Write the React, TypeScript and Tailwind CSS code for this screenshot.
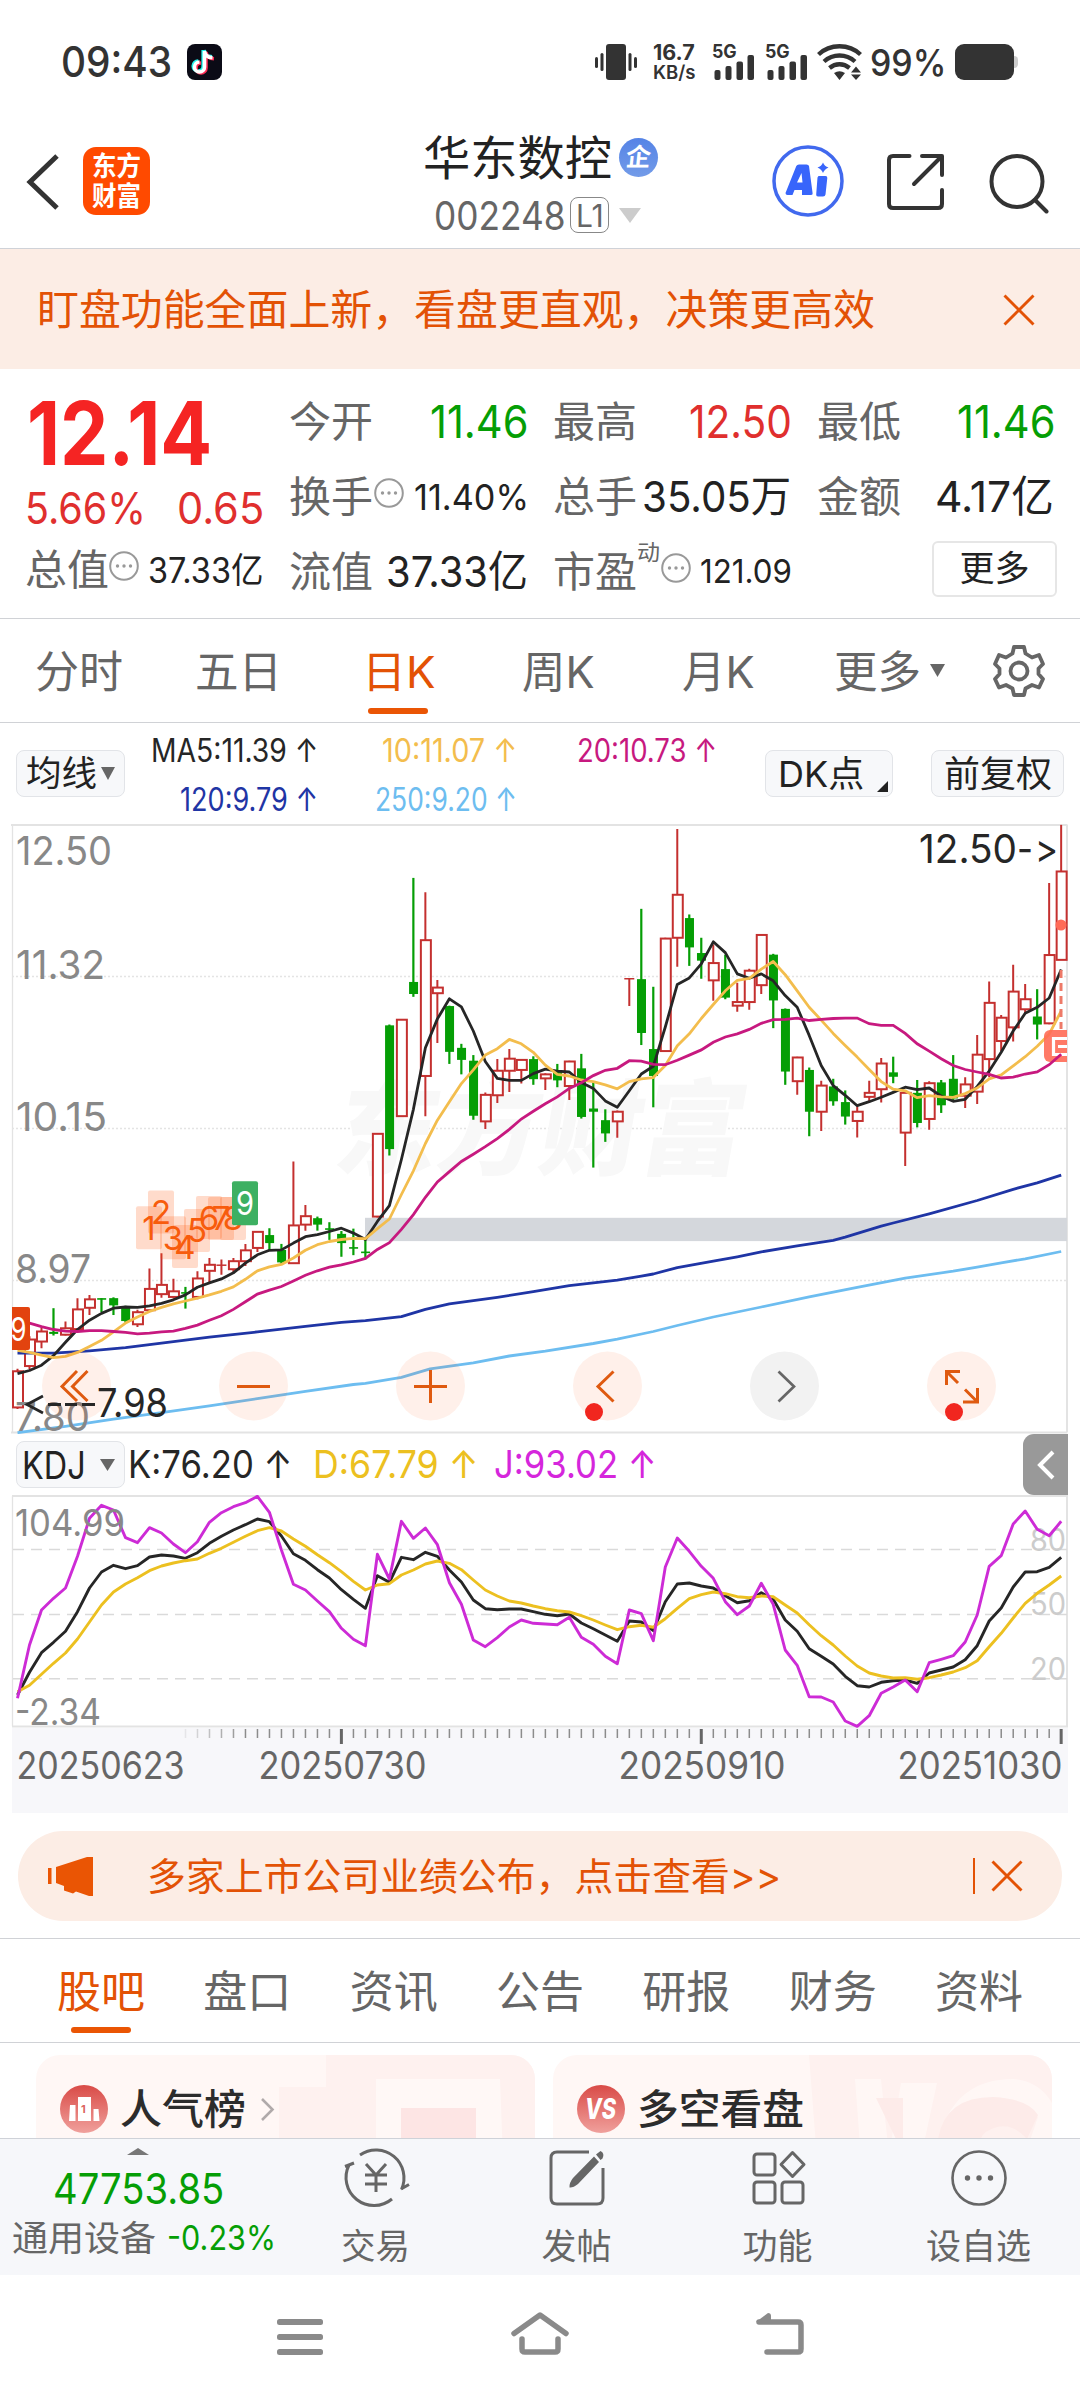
import React, { useLayoutEffect, useRef, useState } from 'react';

/* Single line of text squeezed or stretched to the width of its box. */
function Fit({ className = '', children }: { className?: string; children: React.ReactNode }) {
  const box = useRef<HTMLDivElement>(null);
  const inner = useRef<HTMLSpanElement>(null);
  const [k, setK] = useState(1);
  useLayoutEffect(() => {
    if (box.current && inner.current && inner.current.offsetWidth > 0) {
      setK(box.current.clientWidth / inner.current.offsetWidth);
    }
  }, []);
  return (
    <div ref={box} className={'flex shrink-0 items-center leading-none ' + className}>
      <span ref={inner} className="shrink-0 origin-left whitespace-nowrap" style={{ transform: `scaleX(${k})` }}>
        {children}
      </span>
    </div>
  );
}

/* ---------- chart data ---------- */

// [kind, high, bodyTop, bodyBottom, low]; r = hollow rise, g = filled fall
type Candle = ['r' | 'g', number, number, number, number];
const candles: Candle[] = [
  ['r', 1391, 1397, 1487, 1491], ['r', 1310, 1318, 1384, 1392], ['r', 1288, 1298, 1323, 1340], ['g', 1240, 1299, 1304, 1308],
  ['r', 1273, 1290, 1306, 1308], ['r', 1215, 1243, 1292, 1296], ['r', 1207, 1218, 1239, 1257], ['g', 1215, 1215, 1219, 1250],
  ['g', 1213, 1215, 1233, 1257], ['g', 1234, 1238, 1272, 1276], ['r', 1244, 1250, 1280, 1287], ['r', 1141, 1192, 1245, 1248],
  ['r', 1103, 1182, 1205, 1214], ['r', 1167, 1198, 1212, 1216], ['g', 1187, 1200, 1204, 1241], ['r', 1148, 1166, 1212, 1218],
  ['r', 1115, 1132, 1147, 1175], ['r', 1119, 1133, 1134, 1157], ['r', 1115, 1123, 1143, 1152], ['r', 1080, 1096, 1123, 1135],
  ['r', 1048, 1050, 1090, 1100], ['g', 1041, 1058, 1078, 1095], ['g', 1080, 1095, 1126, 1130], ['r', 875, 1034, 1128, 1130],
  ['r', 983, 1011, 1032, 1047], ['g', 1012, 1016, 1032, 1047], ['g', 1026, 1041, 1045, 1070], ['g', 1048, 1055, 1078, 1112],
  ['g', 1042, 1088, 1092, 1108], ['g', 1070, 1099, 1103, 1118], ['r', 804, 806, 1012, 1014], ['g', 534, 536, 844, 860],
  ['r', 521, 522, 762, 764], ['g', 169, 428, 458, 465], ['r', 205, 324, 662, 762], ['r', 423, 442, 456, 580],
  ['g', 487, 488, 602, 632], ['g', 582, 592, 622, 658], ['g', 610, 624, 761, 771], ['r', 703, 709, 775, 794],
  ['r', 620, 649, 710, 729], ['r', 595, 619, 649, 702], ['r', 620, 622, 647, 681], ['g', 613, 620, 670, 684],
  ['r', 655, 658, 668, 697], ['g', 632, 648, 673, 690], ['r', 624, 626, 687, 722], ['g', 607, 643, 764, 768],
  ['g', 678, 743, 751, 890], ['g', 745, 772, 805, 826], ['r', 748, 751, 775, 816], ['r', 419, 420, 420, 488],
  ['g', 246, 421, 555, 585], ['g', 440, 595, 662, 740], ['r', 318, 320, 600, 602], ['r', 47, 211, 318, 390],
  ['g', 260, 269, 342, 388], ['g', 318, 356, 375, 420], ['r', 335, 381, 424, 475], ['g', 360, 396, 467, 471],
  ['r', 430, 478, 487, 502], ['r', 395, 400, 478, 497], ['r', 310, 311, 436, 458], ['g', 358, 360, 474, 543],
  ['g', 494, 495, 651, 684], ['r', 614, 616, 675, 709], ['g', 641, 647, 751, 812], ['r', 674, 686, 751, 799],
  ['g', 669, 688, 725, 736], ['g', 698, 727, 763, 783], ['r', 738, 751, 774, 815], ['r', 674, 704, 714, 724],
  ['r', 617, 631, 695, 728], ['g', 614, 653, 664, 680], ['r', 700, 704, 803, 886], ['g', 672, 704, 779, 790],
  ['r', 675, 680, 769, 796], ['g', 672, 678, 735, 754], ['g', 610, 669, 718, 723], ['r', 665, 683, 711, 742],
  ['r', 560, 609, 701, 732], ['r', 427, 480, 620, 665], ['r', 510, 517, 575, 600], ['r', 385, 452, 541, 576],
  ['r', 433, 471, 496, 505], ['g', 446, 514, 534, 571], ['r', 182, 361, 531, 533], ['r', 37, 153, 373, 373],
];
const ma5 = [1403, 1395, 1382, 1358, 1325, 1293, 1270, 1253, 1240, 1237, 1238, 1234, 1228, 1219, 1207, 1188, 1177, 1167, 1152, 1128, 1107, 1096, 1095, 1078, 1062, 1057, 1049, 1041, 1053, 1069, 1024, 985, 870, 745, 592, 520, 470, 490, 550, 626, 668, 673, 673, 656, 645, 650, 652, 678, 693, 724, 740, 699, 657, 638, 540, 434, 418, 383, 328, 355, 408, 419, 408, 425, 462, 491, 561, 636, 686, 710, 736, 726, 715, 703, 690, 696, 692, 712, 725, 720, 688, 650, 603, 550, 506, 491, 468, 397];
const ma10 = [1345, 1350, 1357, 1363, 1360, 1350, 1335, 1320, 1299, 1277, 1262, 1248, 1238, 1229, 1222, 1215, 1207, 1198, 1187, 1168, 1147, 1137, 1131, 1115, 1096, 1082, 1074, 1069, 1066, 1067, 1042, 1018, 957, 898, 830, 772, 726, 681, 647, 610, 594, 571, 582, 603, 635, 658, 662, 672, 676, 684, 694, 676, 669, 666, 636, 587, 557, 519, 484, 450, 424, 419, 396, 377, 410, 450, 491, 523, 556, 586, 615, 646, 676, 695, 699, 716, 711, 714, 715, 706, 692, 669, 659, 637, 614, 588, 558, 500];
const ma20 = [1270, 1277, 1286, 1293, 1297, 1298, 1296, 1296, 1298, 1300, 1304, 1302, 1299, 1297, 1290, 1282, 1270, 1259, 1243, 1224, 1205, 1195, 1186, 1172, 1158, 1147, 1138, 1132, 1125, 1116, 1094, 1077, 1044, 1007, 964, 926, 900, 875, 857, 838, 818, 795, 769, 750, 731, 714, 693, 679, 661, 648, 643, 624, 625, 633, 634, 623, 610, 597, 578, 565, 557, 546, 531, 522, 521, 518, 524, 521, 519, 518, 518, 532, 536, 536, 556, 582, 600, 619, 636, 646, 652, 658, 667, 665, 657, 652, 634, 608];
const ma120: [number, number][] = [[0, 1352], [3, 1352], [6, 1346], [9, 1338], [12, 1327], [16, 1312], [20, 1299], [24, 1285], [27, 1275], [29, 1271], [32, 1261], [34, 1243], [36, 1229], [40, 1213], [43, 1199], [46, 1184], [48, 1177], [50, 1170], [52, 1160], [53, 1155], [55, 1139], [58, 1123], [60, 1112], [62, 1100], [65, 1085], [68, 1071], [69, 1063], [72, 1036], [73, 1028], [76, 1005], [80, 972], [83, 944], [85, 928], [87, 909]];
const ma250: [number, number][] = [[0, 1550], [4, 1534], [8, 1516], [12, 1500], [16, 1483], [20, 1465], [24, 1447], [28, 1430], [29, 1427], [32, 1412], [34.4, 1391], [38, 1376], [41, 1359], [44, 1347], [48, 1328], [50, 1317], [53, 1298], [55, 1283], [58, 1262], [62, 1237], [66, 1212], [70, 1188], [74, 1165], [78, 1148], [80, 1138], [82, 1127], [84, 1117], [87, 1099]];
const kLine = [795, 727, 668, 637, 604, 545, 474, 426, 406, 416, 407, 381, 375, 378, 385, 368, 340, 319, 300, 284, 267, 275, 318, 371, 391, 419, 444, 479, 508, 535, 437, 457, 382, 389, 367, 379, 420, 456, 510, 536, 539, 537, 537, 545, 553, 557, 552, 579, 596, 615, 634, 573, 576, 602, 515, 462, 459, 468, 474, 497, 518, 512, 488, 508, 570, 604, 656, 679, 702, 739, 767, 771, 757, 752, 750, 760, 729, 720, 711, 689, 647, 573, 534, 471, 426, 425, 412, 382];
const dLine = [785, 766, 733, 700, 669, 627, 576, 525, 486, 462, 443, 422, 408, 399, 392, 387, 370, 355, 337, 319, 302, 293, 303, 327, 349, 374, 398, 425, 454, 480, 465, 461, 435, 420, 402, 393, 400, 419, 450, 480, 498, 513, 519, 528, 536, 542, 546, 557, 570, 585, 599, 590, 586, 592, 566, 535, 506, 494, 486, 491, 500, 503, 498, 500, 525, 549, 584, 617, 645, 678, 708, 729, 738, 744, 743, 748, 743, 735, 726, 713, 692, 650, 610, 564, 520, 490, 465, 438];
const jLine = [805, 645, 540, 505, 474, 379, 265, 226, 240, 323, 338, 293, 309, 342, 368, 335, 277, 248, 230, 218, 199, 247, 360, 463, 480, 513, 545, 595, 628, 647, 373, 447, 274, 325, 294, 344, 458, 523, 630, 650, 623, 591, 570, 580, 582, 584, 562, 622, 643, 679, 701, 540, 551, 632, 411, 324, 364, 409, 445, 515, 554, 528, 460, 523, 660, 706, 800, 801, 816, 873, 889, 857, 790, 771, 750, 785, 698, 688, 677, 636, 555, 409, 377, 282, 243, 298, 317, 274];

const X = (i: number) => 17.5 + i * 11.996;
const Y = (v: number) => v / 2.489 - 13;
const KY = (v: number) => v / 3 - 65;
const line = (d: number[], f: (v: number) => number) => d.map((v, i) => `${X(i).toFixed(1)},${f(v).toFixed(1)}`).join(' ');
const sparse = (d: [number, number][]) => d.map(([i, v]) => `${X(i).toFixed(1)},${Y(v).toFixed(1)}`).join(' ');

const marks: [string, number, number][] = [
  ['1', 136, 986], ['2', 148, 947], ['3', 160, 1011], ['4', 172, 1033], ['5', 184, 993], ['6', 196, 961], ['7', 208, 963], ['8', 220, 963],
];

function PriceChart() {
  return (
    <svg className="block shrink-0" width="1080" height="611" viewBox="0 0 1080 611" fontFamily="Inter, sans-serif">
      <g stroke="#e3e3e3" fill="none">
        <path d="M11 2H1067.500" strokeWidth="2" />
        <path d="M11 609.500H1067.500" strokeWidth="2" />
        <path d="M12.500 2V609" strokeWidth="1.300" />
        <path d="M1067 2V609" strokeWidth="2" />
        <path d="M12 153.500H1067M12 305.500H1067M12 457.500H1067" strokeWidth="1.500" strokeDasharray="2 2" stroke="#e4e4e4" />
      </g>
      <text x="334" y="344" fontSize="104" fontWeight="900" fontFamily="'Noto Sans CJK SC', sans-serif" fill="#f8f8f8" textLength="408" lengthAdjust="spacingAndGlyphs" transform="translate(58 0) skewX(-10)">东方财富</text>
      <rect x="365" y="394.800" width="702" height="23.300" fill="#d4d7dc" />
      {candles.map(([c, h, t, b, l], i) => {
        const x = X(i);
        if (c === 'g')
          return (
            <g key={i} fill="#059e05">
              <rect x={x - 1.100} y={Y(h)} width="2.200" height={Y(l) - Y(h)} />
              <rect x={x - 4.300} y={Y(t)} width="9" height={Math.max(Y(b) - Y(t), 1.500)} />
            </g>
          );
        return (
          <g key={i} fill="none" stroke="#c4302f" strokeWidth="2">
            <path d={`M${x} ${Y(h)}V${Y(t)}M${x} ${Y(b)}V${Y(l)}`} />
            {b - t < 3 ? <path d={`M${x - 5} ${Y(t)}h10`} strokeWidth="1.500" /> : <rect x={x - 4.500} y={Y(t)} width="10" height={Y(b) - Y(t)} fill="#fff" />}
          </g>
        );
      })}
      <circle cx="1061" cy="102" r="5.500" fill="#ff6b57" />
      <g fill="none" strokeWidth="2.800" strokeLinejoin="round">
        <polyline points={sparse(ma250)} stroke="#6dbdf0" />
        <polyline points={sparse(ma120)} stroke="#1f35a5" />
        <polyline points={line(ma5, Y)} stroke="#262626" />
        <polyline points={line(ma10, Y)} stroke="#f3bd4d" />
      </g>
      <path d="M1061 147V206" stroke="#ee7a68" strokeWidth="3" strokeDasharray="8 5" />
      <path d="M1067 207H1050a6 6 0 0 0-6 6V233a6 6 0 0 0 6 6H1067Z" fill="#ff6b57" fillOpacity=".9" />
      <path d="M1067 215.500H1053.500V231.500H1067M1058 223.500H1067" stroke="#fff" strokeWidth="3.200" fill="none" />
      <polyline points={line(ma20, Y)} fill="none" stroke="#c7197f" strokeWidth="2.800" />
      {marks.map(([n, x, y]) => (
        <g key={n}>
          <rect x={x} y={Y(y)} width="26" height="43" rx="2" fill="#ff5a14" fillOpacity=".22" />
          <text x={x + 13} y={Y(y) + 33.500} fontSize="33" fill="#f75c0c" textAnchor="middle">{n}</text>
        </g>
      ))}
      <rect x="232" y={Y(924)} width="26" height="44" rx="2" fill="#3db062" />
      <text x="245" y={Y(924) + 34} fontSize="33" fill="#fff" textAnchor="middle" textLength="18" lengthAdjust="spacingAndGlyphs">9</text>
      <path d="M12 484H28a2 2 0 0 1 2 2V525a2 2 0 0 1-2 2H12Z" fill="#e2430f" />
      <text x="10.500" y="518" fontSize="33" fill="#fff" textLength="16" lengthAdjust="spacingAndGlyphs">9</text>
      <g fill="#888" fontSize="39.500">
        <text x="16" y="41.500" textLength="96" lengthAdjust="spacingAndGlyphs">12.50</text>
        <text x="16" y="155.500" textLength="89" lengthAdjust="spacingAndGlyphs">11.32</text>
        <text x="16" y="307.500" textLength="91" lengthAdjust="spacingAndGlyphs">10.15</text>
        <text x="15" y="459.500" textLength="76" lengthAdjust="spacingAndGlyphs">8.97</text>
        <text x="15" y="608" textLength="75" lengthAdjust="spacingAndGlyphs">7.80</text>
      </g>
      <g fill="#ff5a14" fillOpacity=".09">
        <circle cx="76.500" cy="563" r="34.500" />
        <circle cx="253.500" cy="563" r="34.500" />
        <circle cx="430.500" cy="563" r="34.500" />
        <circle cx="607.500" cy="563" r="34.500" />
        <circle cx="961.500" cy="563" r="34.500" />
      </g>
      <circle cx="784.500" cy="563" r="34.500" fill="#f2f2f2" />
      <g fill="none" stroke="#df5a10" strokeWidth="3">
        <path d="M77 548L62 563.500L77 578M87.500 548L72.500 563.500L87.500 578" />
        <path d="M237 563.500H270M414 563.500H447M430.500 547V580" />
        <path d="M613.500 548.500L598 563.500L613.500 578.500" />
        <path d="M946.500 562V548.500H960M947 549L958 560M977.500 565V579H963M977 578.500L965 566.500" />
      </g>
      <path d="M778.500 548.500L794 563.500L778.500 578.500" fill="none" stroke="#666" strokeWidth="2.700" />
      <circle cx="594" cy="589" r="9" fill="#f1261f" />
      <circle cx="954" cy="589" r="9" fill="#f1261f" />
      <g fill="#262626">
        <text x="919" y="39.500" fontSize="40" textLength="98" lengthAdjust="spacingAndGlyphs">12.50</text>
        <text x="1017" y="39.500" fontSize="40" textLength="16" lengthAdjust="spacingAndGlyphs">-</text>
        <text x="1035" y="39.500" fontSize="40" textLength="23" lengthAdjust="spacingAndGlyphs">&gt;</text>
        <text x="97" y="594" fontSize="40" textLength="71" lengthAdjust="spacingAndGlyphs">7.98</text>
        <path d="M43 573L27 581.500L43 590M48 581.500H61M65 581.500H77M82 581.500H95" fill="none" stroke="#262626" strokeWidth="2.800" />
      </g>
    </svg>
  );
}

function KdjChart() {
  return (
    <svg className="block shrink-0" width="1080" height="318" viewBox="0 0 1080 318" fontFamily="Inter, sans-serif">
      <rect x="12" y="233" width="1056" height="85" fill="#f7f7fa" />
      <g stroke="#e3e3e3" strokeWidth="2" fill="none">
        <path d="M12 1H1067V231.500H12" />
        <path d="M12.500 1V231" strokeWidth="1.300" />
        <path d="M13 54.500H1067M13 119.500H1067M13 183.800H1067" strokeWidth="1.500" stroke="#dadada" strokeDasharray="11 7" />
      </g>
      <g fill="#ccc" fontSize="30.500">
        <text x="1030" y="56" textLength="36" lengthAdjust="spacingAndGlyphs">80</text>
        <text x="1030" y="120" textLength="36" lengthAdjust="spacingAndGlyphs">50</text>
        <text x="1030" y="185" textLength="36" lengthAdjust="spacingAndGlyphs">20</text>
      </g>
      <g fill="none" strokeWidth="2.900" strokeLinejoin="round">
        <polyline points={line(kLine, KY)} stroke="#262626" />
        <polyline points={line(dLine, KY)} stroke="#ecc020" />
        <polyline points={line(jLine, KY)} stroke="#cd2bd6" />
      </g>
      <g fill="#888" fontSize="37">
        <text x="15" y="41" textLength="110" lengthAdjust="spacingAndGlyphs">104.99</text>
        <text x="15" y="230" textLength="86" lengthAdjust="spacingAndGlyphs">-2.34</text>
      </g>
      {candles.map((_, i) => {
        if (i < 14) return null;
        const major = i === 27 || i === 57 || i === 87;
        return (
          <rect key={i} x={X(i) - (major ? 1.500 : 0.700)} y="234" width={major ? 3 : 1.500} height={major ? 15 : 9} fill={major ? '#666' : '#8c8c8c'} opacity={i < 19 ? (i - 13) / 6 : 1} />
        );
      })}
      <g fill="#666" fontSize="38">
        <text x="16.500" y="283.500" textLength="168" lengthAdjust="spacingAndGlyphs">20250623</text>
        <text x="258.500" y="283.500" textLength="168" lengthAdjust="spacingAndGlyphs">20250730</text>
        <text x="618.500" y="283.500" textLength="167" lengthAdjust="spacingAndGlyphs">20250910</text>
        <text x="897.500" y="283.500" textLength="165" lengthAdjust="spacingAndGlyphs">20251030</text>
      </g>
    </svg>
  );
}

/* ---------- small pieces ---------- */

function Dots() {
  return (
    <svg width="30" height="30" viewBox="0 0 30 30" className="shrink-0">
      <circle cx="15" cy="15" r="13.800" fill="none" stroke="#999" strokeWidth="2" />
      <g fill="#999"><circle cx="8.500" cy="15" r="1.700" /><circle cx="15" cy="15" r="1.700" /><circle cx="21.500" cy="15" r="1.700" /></g>
    </svg>
  );
}

function Close({ className = '' }: { className?: string }) {
  return (
    <svg width="34" height="34" viewBox="0 0 34 34" className={'shrink-0 ' + className}>
      <path d="M2.500 2.500L31.500 31.500M31.500 2.500L2.500 31.500" stroke="#e35205" strokeWidth="2.900" />
    </svg>
  );
}

function Down({ className = '' }: { className?: string }) {
  return (
    <svg viewBox="0 0 10 8" preserveAspectRatio="none" className={'shrink-0 ' + className}>
      <path d="M0 0H10L5 8Z" fill="currentColor" />
    </svg>
  );
}

function Signal() {
  return (
    <div className="relative h-9 w-[42px]">
      <Fit className="absolute left-0 top-0 h-[14px] w-[25px] text-[18.500px] font-bold">5G</Fit>
      <svg className="absolute left-0 top-0" width="43" height="36" viewBox="0 0 43 36" fill="#333">
        <rect x="2.500" y="26" width="6" height="10" rx="2" />
        <rect x="13.500" y="22" width="6" height="14" rx="2" />
        <rect x="24.500" y="17.500" width="6.500" height="18.500" rx="2" />
        <rect x="35.500" y="11" width="6.500" height="25" rx="2" />
      </svg>
    </div>
  );
}

function StatusBar() {
  return (
    <div className="flex h-[124px] items-start pl-[61px] pt-11 text-[#333]">
      <div className="flex h-9 items-center">
        <Fit className="w-[111px] text-[42px] font-medium">09:43</Fit>
        <svg className="ml-[15px]" width="35" height="36" viewBox="0 0 35 36">
          <rect width="35" height="36" rx="8" fill="#0b0b16" />
          <g fill="none" strokeWidth="3.600">
            <path d="M17.500 7V23a5 5 0 1 1-5-5" stroke="#25f4ee" transform="translate(-1.300 -1)" />
            <path d="M17.500 7c.5 4 3.500 6.500 8 6.800" stroke="#25f4ee" transform="translate(-.5 -1)" />
            <path d="M17.500 7V23a5 5 0 1 1-5-5M17.500 7c.5 4 3.500 6.500 8 6.800" stroke="#fe2c55" transform="translate(1.500 1)" />
            <path d="M17.500 7V23a5 5 0 1 1-5-5M17.500 7c.5 4 3.500 6.500 8 6.800" stroke="#fff" />
          </g>
        </svg>
      </div>
      <svg className="ml-[373px]" width="42" height="36" viewBox="0 0 42 36" fill="#333">
        <rect x="11" width="20" height="36" rx="3" />
        <rect x="0" y="13" width="3" height="11" rx="1.500" /><rect x="5.500" y="9" width="3" height="18" rx="1.500" />
        <rect x="39" y="13" width="3" height="11" rx="1.500" /><rect x="33.500" y="9" width="3" height="18" rx="1.500" />
      </svg>
      <div className="ml-4 flex h-9 flex-col justify-between">
        <Fit className="h-4 w-[42px] text-[21px] font-bold">16.7</Fit>
        <Fit className="h-4 w-[43px] text-[19px] font-semibold">KB/s</Fit>
      </div>
      <div className="ml-4"><Signal /></div>
      <div className="ml-[11px]"><Signal /></div>
      <svg className="ml-[10px]" width="46" height="36" viewBox="0 0 46 36" fill="none" stroke="#333" strokeWidth="4.300">
        <path d="M1.500 10.500C13-.5 32-.5 43.500 10.500M7 17.500c9-8 22-8 31 0M12.500 24c6-5 14-5 20 0" />
        <path d="M17 29q5.500-3.500 11 0L22.500 36ZM34 28.500h10L39 22.500ZM34 30.500h10L39 36Z" fill="#333" stroke="none" />
      </svg>
      <Fit className="ml-[7px] h-9 w-[76px] text-[37px] font-medium">99%</Fit>
      <div className="ml-[9px] h-9 w-[59px] rounded-[9px] bg-[#333]" />
      <div className="mt-3 h-3 w-[4px] rounded-r bg-[#ccc]" />
    </div>
  );
}

function Header() {
  return (
    <div className="flex h-[125px] border-b border-[#cfd2d8]">
      <svg className="ml-[26px] mt-[30px]" width="34" height="56" viewBox="0 0 34 56" fill="none" stroke="#333" strokeWidth="5">
        <path d="M31 2L4 28L31 54" />
      </svg>
      <div className="ml-[23px] mt-[23px] flex h-[68px] w-[67px] flex-col items-center justify-center gap-[3px] rounded-[13px] bg-[#ff4a00] text-white">
        <Fit className="h-[27px] w-[49px] text-[27px] font-bold">东方</Fit>
        <Fit className="h-[27px] w-[49px] text-[27px] font-bold">财富</Fit>
      </div>
      <div className="ml-[273px] w-[240px]">
        <div className="mt-[9px] flex h-[49px] items-center">
          <Fit className="w-[189px] text-[47px] text-[#222]">华东数控</Fit>
          <div className="ml-[7px] flex size-[39px] items-center justify-center rounded-full bg-gradient-to-b from-[#5583e6] to-[#739be8] text-[25px] font-bold leading-none text-white">
            <span className="-skew-x-6">企</span>
          </div>
        </div>
        <div className="mt-[15px] flex h-9 items-center">
          <Fit className="ml-[11px] w-[132px] text-[39px] text-[#666]">002248</Fit>
          <div className="ml-[4px] flex h-9 w-[39px] items-center justify-center rounded-lg border border-[#888] text-[#666]">
            <Fit className="w-[28px] text-[31px]">L1</Fit>
          </div>
          <Down className="ml-[10px] h-[15px] w-[22px] text-[#ccc]" />
        </div>
      </div>
      <svg className="ml-[109px] mt-[21px]" width="72" height="72" viewBox="0 0 72 72">
        <circle cx="36" cy="36" r="34" fill="none" stroke="#4169ee" strokeWidth="3.500" />
        <g fill="#3865fb">
          <path fillRule="evenodd" d="M13.500 48Q13.500 50 15.500 50H20.500L22.500 45H30V50H39Q41 50 40.500 47.500L37 21Q36.500 19.500 34.500 19.500H27Q25 19.500 24.300 21ZM25 37.500L29.500 28L30.500 37.500Z" />
          <path d="M46.500 31H53.500Q55.500 31 55.300 33L53.500 49.500Q53.200 51.500 51 51.500H46Q44 51.500 44.200 49.500L45.500 32.500ZM51 17.500Q52.500 21.500 56.500 22.500Q52.500 24 51 28Q49.500 24 45.500 22.500Q49.500 21.500 51 17.500Z" />
        </g>
      </svg>
      <svg className="ml-[41px] mt-[28px]" width="60" height="60" viewBox="0 0 60 60" fill="none" stroke="#333" strokeWidth="4" strokeLinecap="round" strokeLinejoin="round">
        <path d="M24.500 4H8Q4 4 4 8V52Q4 56 8 56H53Q57 56 57 52V38M37 4H57V23M56 5L29 32" />
      </svg>
      <svg className="ml-[42px] mt-[28px]" width="62" height="62" viewBox="0 0 62 62" fill="none" stroke="#333" strokeWidth="4" strokeLinecap="round">
        <circle cx="30" cy="29.500" r="25.500" /><path d="M48 48L59.500 59.500" />
      </svg>
    </div>
  );
}

function Quote() {
  return (
    <div className="flex h-[250px] border-b border-[#d0d2d6] text-[42px] text-[#666]">
      <div className="w-[289px] shrink-0">
        <Fit className="ml-[27px] mt-[30px] h-[68px] w-[185px] text-[88px] font-bold text-[#f52423]">12.14</Fit>
        <div className="mt-[24px] flex h-[34px] items-center text-[44px] text-[#e02f2e]">
          <Fit className="ml-[25px] w-[121px]">5.66%</Fit>
          <Fit className="ml-[31px] w-[87px]">0.65</Fit>
        </div>
        <div className="mt-[22px] flex h-[46px] items-center">
          <Fit className="ml-[25px] w-[84px]">总值</Fit>
          <div className="mb-2"><Dots /></div>
          <Fit className="ml-[9px] w-[115px] text-[35px] text-[#222]">37.33亿</Fit>
        </div>
      </div>
      <div className="mt-[15px] w-[263px] shrink-0">
        <div className="flex h-[75px] items-center">
          <Fit className="w-[84px]">今开</Fit>
          <Fit className="ml-[57px] w-[99px] text-[45px] text-[#059e05]">11.46</Fit>
        </div>
        <div className="flex h-[75px] items-center">
          <Fit className="w-[84px]">换手</Fit>
          <div className="mb-2 ml-px"><Dots /></div>
          <Fit className="ml-[10px] w-[115px] text-[36px] text-[#222]">11.40%</Fit>
        </div>
        <div className="flex h-[75px] items-center">
          <Fit className="w-[84px]">流值</Fit>
          <Fit className="ml-[13px] w-[142px] text-[43px] text-[#222]">37.33亿</Fit>
        </div>
      </div>
      <div className="mt-[15px] w-[263px] shrink-0">
        <div className="flex h-[75px] items-center">
          <Fit className="ml-px w-[84px]">最高</Fit>
          <Fit className="ml-[52px] w-[103px] text-[45px] text-[#e02f2e]">12.50</Fit>
        </div>
        <div className="flex h-[75px] items-center">
          <Fit className="ml-px w-[84px]">总手</Fit>
          <Fit className="ml-[5px] w-[149px] text-[43px] text-[#222]">35.05万</Fit>
        </div>
        <div className="flex h-[75px] items-center">
          <Fit className="ml-px w-[84px]">市盈</Fit>
          <Fit className="mb-[39px] w-[23px] text-[22px]">动</Fit>
          <div className="mb-2 ml-px"><Dots /></div>
          <Fit className="ml-[9px] w-[92px] text-[33px] text-[#222]">121.09</Fit>
        </div>
      </div>
      <div className="mt-[15px] w-[265px] shrink-0">
        <div className="flex h-[75px] items-center">
          <Fit className="ml-[2px] w-[84px]">最低</Fit>
          <Fit className="ml-[56px] w-[99px] text-[45px] text-[#059e05]">11.46</Fit>
        </div>
        <div className="flex h-[75px] items-center">
          <Fit className="ml-[2px] w-[84px]">金额</Fit>
          <Fit className="ml-[34px] w-[119px] text-[43px] text-[#222]">4.17亿</Fit>
        </div>
        <div className="flex h-[69px] items-center">
          <div className="ml-[117px] flex h-[56px] w-[125px] items-center justify-center rounded-md border-2 border-[#e6e6e6] text-[#222]">
            <Fit className="w-[70px] text-[35px]">更多</Fit>
          </div>
        </div>
      </div>
    </div>
  );
}

function PeriodTabs() {
  return (
    <div className="flex h-[104px] items-center border-b border-[#d0d2d6] pt-[3px] text-[44px] text-[#666]">
      <Fit className="ml-[35px] h-11 w-[88px]">分时</Fit>
      <Fit className="ml-[72px] h-11 w-[87px]">五日</Fit>
      <div className="relative ml-[80px] h-11 w-[73px] text-[#e35205]">
        <Fit className="h-11 w-[74px]">日K</Fit>
        <div className="absolute left-[6px] top-[58px] h-[6px] w-[60px] rounded-full bg-[#ea5504]" />
      </div>
      <Fit className="ml-[87px] h-11 w-[73px]">周K</Fit>
      <Fit className="ml-[87px] h-11 w-[73px]">月K</Fit>
      <Fit className="ml-[79px] h-11 w-[87px]">更多</Fit>
      <Down className="mb-[3px] ml-[9px] h-[13px] w-[15px]" />
      <svg className="mb-[3px] ml-[46px]" width="56" height="56" viewBox="0 0 56 56" fill="none" stroke="#666" strokeWidth="3.800" strokeLinejoin="round">
        <circle cx="28" cy="28" r="8.500" />
        <path d="M23 4H33L34.500 10.500L41 14.500L48 12L52 21L47.500 25.500V31L52 36L48 44.500L41 42L34.500 45.500L33 52H23L21.500 45.500L15 42L8 44.500L4 36L8.500 31V25.500L4 21L8 12L15 14.500L21.500 10.500Z" />
      </svg>
    </div>
  );
}

function MaRow() {
  return (
    <div className="flex h-[99px] items-start text-[32px]">
      <div className="ml-4 mt-[27px] flex h-[47px] w-[109px] items-center rounded-lg border-[1.500px] border-[#e2e4e8] bg-[#f7f8fa] text-[#222]">
        <Fit className="ml-[9px] w-[71px] text-[35px]">均线</Fit>
        <Down className="ml-[4px] h-[13px] w-[14px] text-[#666]" />
      </div>
      <div className="ml-[26px] mt-[12px] flex w-[167px] flex-col items-end">
        <Fit className="h-[32px] w-[167px] text-[#262626]">MA5:11.39 ↑</Fit>
        <Fit className="mt-[17px] h-[32px] w-[138px] text-[#1f35a5]">120:9.79 ↑</Fit>
      </div>
      <div className="ml-[30px] mt-[12px] flex w-[169px] flex-col items-end">
        <Fit className="h-[32px] w-[135px] text-[#f3bd4d]">10:11.07 ↑</Fit>
        <Fit className="mt-[17px] h-[32px] w-[142px] text-[#6dbdf0]">250:9.20 ↑</Fit>
      </div>
      <Fit className="ml-[60px] mt-[12px] h-[32px] w-[140px] text-[#c7197f]">20:10.73 ↑</Fit>
      <div className="relative ml-[48px] mt-[27px] flex h-[47px] w-[128px] items-center rounded-lg border-[1.500px] border-[#e2e4e8] bg-[#f7f8fa] text-[#222]">
        <Fit className="ml-[12px] w-[86px] text-[36px]">DK点</Fit>
        <svg className="absolute bottom-[4px] right-[4px]" width="11" height="11" viewBox="0 0 11 11"><path d="M11 0V11H0Z" fill="#222" /></svg>
      </div>
      <div className="ml-[38px] mt-[27px] flex h-[47px] w-[133px] items-center justify-center rounded-lg border-[1.500px] border-[#e2e4e8] bg-[#f7f8fa] text-[#222]">
        <Fit className="ml-px w-[108px] text-[36px]">前复权</Fit>
      </div>
    </div>
  );
}

function KdjRow() {
  return (
    <div className="flex h-[61px] items-center text-[38.500px]">
      <div className="ml-4 flex h-[47px] w-[109px] items-center rounded-lg border-[1.500px] border-[#e2e4e8] bg-[#f7f8fa] text-[#222]">
        <Fit className="ml-[5px] w-[64px] text-[38px]">KDJ</Fit>
        <Down className="ml-[14px] h-[12px] w-[15px] text-[#666]" />
      </div>
      <Fit className="ml-[3px] w-[165px] text-[#262626]">K:76.20 ↑</Fit>
      <Fit className="ml-[20px] w-[166px] text-[#ecc020]">D:67.79 ↑</Fit>
      <Fit className="ml-[15px] w-[163px] text-[#d526dc]">J:93.02 ↑</Fit>
      <div className="ml-[366px] flex h-[61px] w-[45px] items-center justify-center rounded-l-[11px] bg-[#999]">
        <svg width="20" height="32" viewBox="0 0 20 32" fill="none" stroke="#fff" strokeWidth="4"><path d="M17 3L4 16L17 29" /></svg>
      </div>
    </div>
  );
}

function Notice() {
  return (
    <div className="ml-[18px] mt-[18px] flex h-[90px] w-[1044px] items-center rounded-full bg-[#fcede5] text-[#e35205]">
      <svg className="ml-[29px]" width="47" height="42" viewBox="0 0 47 42" fill="#ea5504">
        <rect x="1" y="13" width="3.500" height="16" /><path d="M9 12L40 2H46V41H42L29 36.500L26 38.500L17 35.500V31L9 28Z" />
      </svg>
      <Fit className="ml-[53px] w-[634px] text-[38px]">多家上市公司业绩公布，点击查看&gt;&gt;</Fit>
      <div className="ml-[192px] h-9 w-[1.500px] bg-[#e35205]" />
      <Close className="ml-[15px]" />
    </div>
  );
}

function SectionTabs() {
  return (
    <div className="mt-[17px] flex h-[105px] items-center justify-between border-y border-[#d0d2d6] pl-[57px] pr-[57px] pt-[3px] text-[44px] text-[#666]">
      <div className="relative text-[#e35205]">
        <Fit className="w-[88px]">股吧</Fit>
        <div className="absolute left-[14px] top-[57px] h-[6px] w-[60px] rounded-full bg-[#ea5504]" />
      </div>
      {['盘口', '资讯', '公告', '研报', '财务', '资料'].map((t) => (
        <Fit key={t} className="w-[88px]">{t}</Fit>
      ))}
    </div>
  );
}

function Cards() {
  return (
    <div className="flex h-[95px] gap-[18px] overflow-hidden pl-9 pt-[12px] text-[41px] font-medium text-[#2c2c2c]">
      <div className="relative h-[130px] w-[499px] shrink-0 overflow-hidden rounded-[24px] bg-[#fff7f5]">
        <svg className="absolute left-0 top-0" width="499" height="130" viewBox="0 0 499 130">
          <path d="M243 130V32H290V0H499V130Z" fill="#fef1ef" />
          <path d="M340 130V24H464L468 130Z" fill="#fff8f6" /><path d="M365 53H440V130H365Z" fill="#fde5e4" />
        </svg>
        <div className="relative flex h-[108px] items-center pl-[24px]">
          <svg width="48" height="48" viewBox="0 0 48 48">
            <defs><linearGradient id="red" x1="0" y1="0" x2="0" y2="1"><stop offset="0" stopColor="#d94b47" /><stop offset="1" stopColor="#f0a09c" /></linearGradient></defs>
            <circle cx="24" cy="24" r="24" fill="url(#red)" />
            <path d="M18 12H31V36H18ZM10 20H15.500V36H9ZM33.500 24H38.500L39.500 36H33.500Z" fill="#fff" />
            <text x="21" y="28" fontSize="11" fontWeight="700" fontFamily="Inter, sans-serif" fill="#dc6661">1</text>
          </svg>
          <Fit className="ml-[12px] w-[126px]">人气榜</Fit>
          <svg className="ml-[14px]" width="15" height="25" viewBox="0 0 15 25" fill="none" stroke="#b0aaaa" strokeWidth="2.600"><path d="M2 2L12.500 12.500L2 23" /></svg>
        </div>
      </div>
      <div className="relative h-[130px] w-[499px] shrink-0 overflow-hidden rounded-[24px] bg-[#fff7f5]">
        <svg className="absolute left-0 top-0" width="499" height="130" viewBox="0 0 499 130">
          <path d="M256 0H499V130H266Z" fill="#fef1ef" />
          <path d="M302 24L310 130H362L384 28H348L336 100L328 24ZM380 130Q382 24 460 24Q486 26 499 48V130H440Q424 130 428 100Q440 78 458 84L472 100L485 62Q440 24 412 60Q392 90 396 130Z" fill="#fff7f5" />
          <path d="M323 43H350V84L343 84ZM385 84Q392 42 440 42Q476 44 485 60L474 84Q460 68 444 72Q430 76 428 84Z" fill="#fdebe9" />
        </svg>
        <div className="relative flex h-[108px] items-center pl-[24px]">
          <svg width="48" height="48" viewBox="0 0 48 48">
            <circle cx="24" cy="24" r="24" fill="url(#red)" />
            <text x="8" y="34" fontSize="28" fontWeight="800" fontStyle="italic" fontFamily="Inter, sans-serif" fill="#fff" textLength="31" lengthAdjust="spacingAndGlyphs">VS</text>
          </svg>
          <Fit className="ml-[12px] w-[167px]">多空看盘</Fit>
        </div>
      </div>
    </div>
  );
}

function BottomBar() {
  const s = { width: 66, height: 60, viewBox: '0 0 66 60', fill: 'none', stroke: '#666', strokeWidth: 3, className: 'overflow-visible' };
  return (
    <div className="flex h-[137px] border-t border-[#cfd2d8] bg-[#f6f7fa] text-[35px] text-[#666]">
      <div className="w-[275px] shrink-0">
        <Down className="ml-[127px] mt-[9px] block h-[7px] w-[22px] rotate-180 text-[#777]" />
        <Fit className="ml-[53px] mt-[12px] h-[44px] w-[171px] text-[42px] text-[#059e05]">47753.85</Fit>
        <div className="mt-[2px] flex h-[50px] items-center">
          <Fit className="ml-[12px] w-[144px]">通用设备</Fit>
          <Fit className="ml-[11px] w-[109px] text-[34.500px] text-[#059e05]">-0.23%</Fit>
        </div>
      </div>
      <div className="flex w-[201px] flex-col items-center pt-[9px]">
        <svg {...s}>
          <path d="M17 7A28 28 0 0 1 58.500 41.500M49 51A28 28 0 0 1 6 17M2 18.500L11 15M66 36.500L58 41" />
          <path d="M23 16L33 27L43 16M22 27H44M22 36H44M33 27V44" />
        </svg>
        <Fit className="mt-[18px] h-[40px] w-[69px]">交易</Fit>
      </div>
      <div className="flex w-[201px] flex-col items-center pt-[9px]">
        <svg {...s}>
          <path d="M45 4H13Q7 4 7 10V50Q7 56 13 56H53Q59 56 59 50V20" />
          <path d="M50 8.500L55 14L34 36Q29 40 25.500 39.500Q25 35 29 30ZM52 6.500L56.500 3Q61 5 58.500 10.500L56.500 12Z" fill="#666" stroke="none" />
        </svg>
        <Fit className="mt-[18px] h-[40px] w-[70px]">发帖</Fit>
      </div>
      <div className="flex w-[201px] flex-col items-center pt-[9px]">
        <svg {...s}>
          <rect x="9" y="6" width="21" height="21" rx="3" /><rect x="9" y="34" width="21" height="21" rx="3" /><rect x="37" y="34" width="21" height="21" rx="3" />
          <path d="M47.500 4.500L59 16.500L47.500 28.500L36 16.500Z" strokeLinejoin="round" />
        </svg>
        <Fit className="mt-[18px] h-[40px] w-[70px]">功能</Fit>
      </div>
      <div className="flex w-[201px] flex-col items-center pt-[9px]">
        <svg {...s}>
          <circle cx="33" cy="30" r="26.500" strokeWidth="2.600" />
          <g fill="#666" stroke="none"><circle cx="21.500" cy="30" r="2.700" /><circle cx="33" cy="30" r="2.700" /><circle cx="44.500" cy="30" r="2.700" /></g>
        </svg>
        <Fit className="mt-[18px] h-[40px] w-[105px]">设自选</Fit>
      </div>
    </div>
  );
}

function SystemNav() {
  return (
    <div className="flex h-[126px] items-start bg-white pt-[37px]">
      <svg className="ml-[277px]" width="46" height="44" viewBox="0 0 46 44" fill="#8a8a8a">
        <rect y="7" width="46" height="6" rx="2.500" /><rect y="22" width="46" height="6" rx="2.500" /><rect y="37" width="46" height="6" rx="2.500" />
      </svg>
      <svg className="ml-[188px]" width="58" height="44" viewBox="0 0 58 44" fill="none" stroke="#8a8a8a" strokeWidth="5.500" strokeLinejoin="round" strokeLinecap="round">
        <path d="M3 21.500L29 3L55 21.500" /><path d="M11 27V37Q11 40 14 40H44Q47 40 47 37V27" />
      </svg>
      <svg className="ml-[187px]" width="48" height="44" viewBox="0 0 48 44" fill="none" stroke="#8a8a8a" strokeWidth="5.500" strokeLinejoin="round">
        <path d="M3 10H42Q45 10 45 13V37Q45 40 42 40H11" strokeLinecap="round" /><path d="M0 10L12 1Q15 1 15 4V10Z" fill="#8a8a8a" stroke="none" />
      </svg>
    </div>
  );
}

export default function App() {
  return (
    <div className="flex h-[2400px] w-[1080px] flex-col overflow-hidden bg-white font-['Inter','Noto_Sans_CJK_SC',sans-serif] [&>*]:shrink-0">
      <StatusBar />
      <Header />
      <div className="flex h-[120px] items-center bg-[#fcede5] pt-px text-[#e35205]">
        <Fit className="ml-[37px] w-[838px] text-[42px]">盯盘功能全面上新，看盘更直观，决策更高效</Fit>
        <Close className="ml-[127px]" />
      </div>
      <Quote />
      <PeriodTabs />
      <MaRow />
      <div className="mt-px"><PriceChart /></div>
      <KdjRow />
      <KdjChart />
      <Notice />
      <SectionTabs />
      <Cards />
      <BottomBar />
      <SystemNav />
    </div>
  );
}
